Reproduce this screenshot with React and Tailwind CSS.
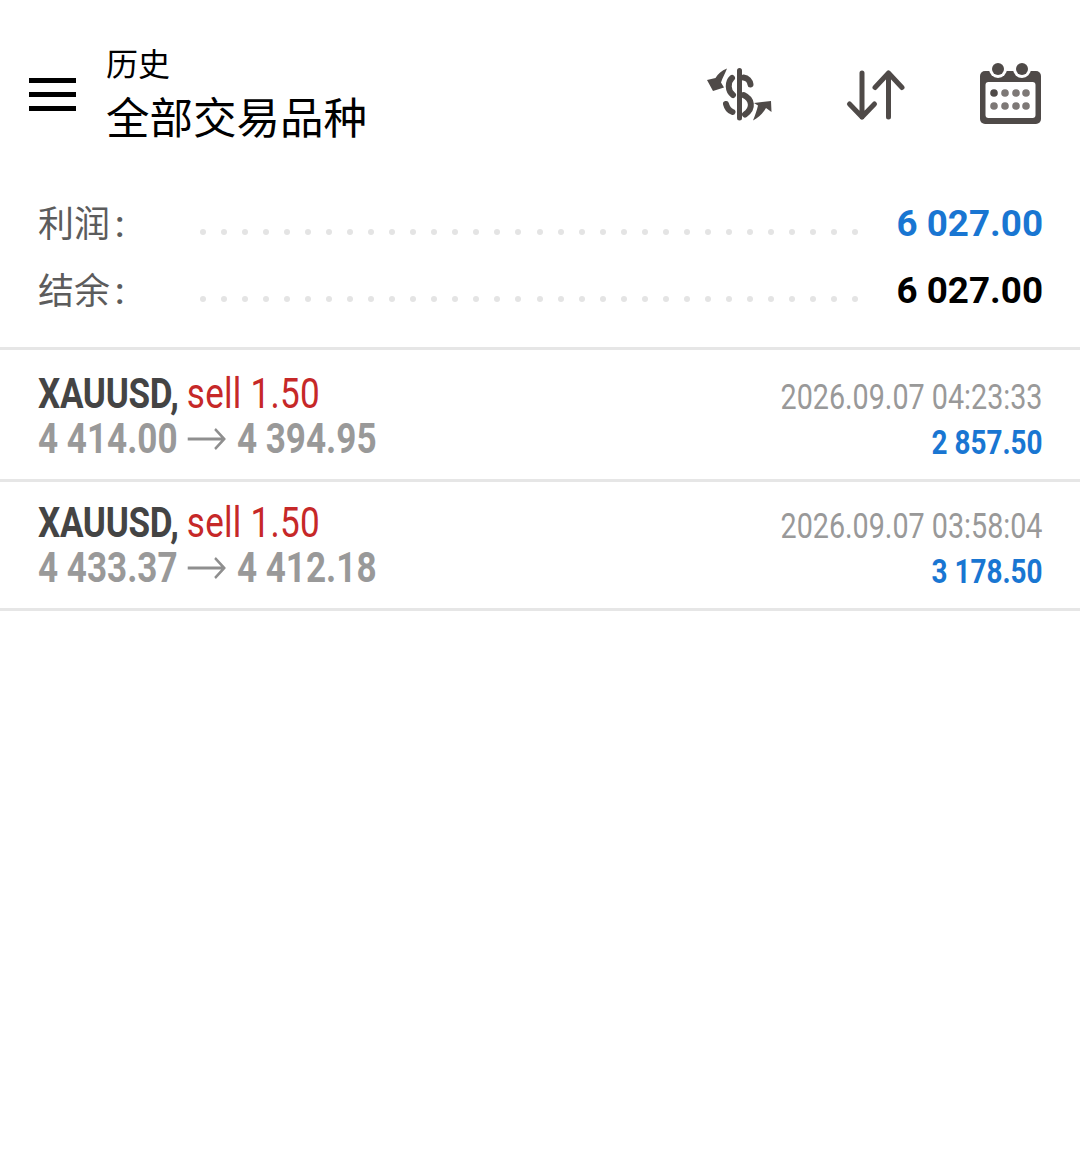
const sans = "font-['Roboto','Noto_Sans_CJK_SC',sans-serif]";

const trades = [
  { open: "4 414.00", close: "4 394.95", time: "2026.09.07 04:23:33", profit: "2 857.50" },
  { open: "4 433.37", close: "4 412.18", time: "2026.09.07 03:58:04", profit: "3 178.50" },
];

const dots = Array.from({ length: 32 });

function DollarIcon() {
  return (
    <svg width="80" height="70" viewBox="0 0 80 70" fill="#4f4a48">
      <rect x="37" y="8" width="5" height="52.5" rx="2.5" />
      {/* pieces of the S around the bar */}
      <g fill="none" stroke="#4f4a48" strokeWidth="6" strokeLinecap="round">
        <path d="M43.5 17.5 C47.5 18 50 21 50.5 24.5" />
        <path d="M32 18 C27.5 22 27.5 31 33 35" />
        <path d="M43.5 35 C52 39 54 48 45 54.5" />
        <path d="M26 44 C27 48 29.5 51 32.5 52" />
      </g>
      {/* swap arrows */}
      <path d="M7 20 L15.5 18 C18 14 21.5 10.5 27 8.5 C25 13.5 22.5 18 21 22.5 L24 27.5 L13 31 Z" />
      <path d="M71 41 L71.5 52 L66 48 C63.5 52.5 59 57.5 53 60.5 C55 55.5 57 50 58 45.5 L54 43 Z" />
    </svg>
  );
}

function SortIcon() {
  return (
    <svg width="60" height="56" viewBox="0 0 60 56" fill="none" stroke="#4f4a48" strokeWidth="5" strokeLinecap="round" strokeLinejoin="round">
      <path d="M17 5 V49 M4.5 36 L17 49 L29.5 36" />
      <path d="M43.5 49 V5 M30 19.5 L43.5 5 L57 19.5" />
    </svg>
  );
}

function CalendarIcon() {
  return (
    <svg width="61" height="62" viewBox="0 0 61 62">
      <rect x="0" y="8" width="61" height="53" rx="5" fill="#4f4a48" />
      <rect x="5.5" y="19" width="50" height="36" rx="3" fill="#fff" />
      <circle cx="18" cy="6" r="9" fill="#fff" />
      <circle cx="42" cy="6" r="9" fill="#fff" />
      <circle cx="18" cy="6" r="6" fill="#4f4a48" />
      <circle cx="42" cy="6" r="6" fill="#4f4a48" />
      {[14, 25, 36, 46].map((cx, i) => (
        <g key={cx}>
          <circle cx={cx} cy="30" r="3.8" fill={i === 0 ? "#4f4a48" : "#7d7876"} />
          <circle cx={cx} cy="43" r="3.8" fill="#7d7876" />
        </g>
      ))}
    </svg>
  );
}

function SummaryRow({ label, value, valueClass }) {
  return (
    <div className="flex items-center h-[67px] pl-[38px] pr-[37px]">
      <span className="w-[162px] text-[36px] leading-none text-[#5c5c5c]">
        {label}
        <span className="ml-[5px] font-medium">:</span>
      </span>
      <div className="flex justify-between w-[658px] mt-[14px]">
        {dots.map((_, i) => (
          <span key={i} className="w-[6px] h-[6px] shrink-0 rounded-full bg-[#e4e4e4]" />
        ))}
      </div>
      <span className={`ml-auto text-[36.8px] leading-none font-bold ${valueClass}`}>{value}</span>
    </div>
  );
}

function TradeRow({ trade, first }) {
  return (
    <div className={`flex justify-between pl-[38px] pr-[38px] border-b-[3px] border-[#e6e6e6] ${first ? "h-[132px] pt-[21px]" : "h-[129px] pt-[18px]"}`}>
      <div className="origin-left scale-x-[0.835] whitespace-nowrap">
        <div className="text-[42px] leading-[45px]">
          <span className="font-bold tracking-[-0.4px] text-[#444444]">XAUUSD, </span>
          <span className="tracking-[0.3px] text-[#c62828]">sell 1.50</span>
        </div>
        <div className="flex items-center text-[42px] leading-[45px] font-bold text-[#999999]">
          <span>{trade.open}</span>
          <svg className="ml-[12px] mr-[13px]" width="46" height="24" viewBox="0 0 46 24" fill="none" stroke="#8f8f8f" strokeWidth="3">
            <path d="M0 12 H44 M33 2 L44 12 L33 22" />
          </svg>
          <span>{trade.close}</span>
        </div>
      </div>
      <div className="origin-right scale-x-[0.82] whitespace-nowrap text-right">
        <div className="text-[35px] leading-[40px] mt-[7px] text-[#999999]">{trade.time}</div>
        <div className="text-[34px] leading-[40px] mt-[4px] font-bold text-[#1976d2]">{trade.profit}</div>
      </div>
    </div>
  );
}

export default function App() {
  return (
    <div className={`w-[1080px] h-[1172px] bg-white ${sans}`}>
      <header className="flex items-center h-[187px] pl-[29px] pr-[39px]">
        <div className="flex flex-col gap-[9px] w-[47px] mt-[2px]">
          <span className="h-[5px] bg-black" />
          <span className="h-[5px] bg-black" />
          <span className="h-[5px] bg-black" />
        </div>
        <div className="ml-[30px] mt-[3px] text-black">
          <div className="text-[32px] leading-[40px]">历史</div>
          <div className="text-[43.5px] leading-[52px] mt-[9px]">全部交易品种</div>
        </div>
        <div className="ml-auto flex items-center">
          <div className="mt-[3px]"><DollarIcon /></div>
          <div className="ml-[65px] mt-[4px]"><SortIcon /></div>
          <div className="ml-[75px]"><CalendarIcon /></div>
        </div>
      </header>
      <section className="border-b-[3px] border-[#e6e6e6] h-[163px] pt-[4px]">
        <SummaryRow label="利润" value="6 027.00" valueClass="text-[#1976d2]" />
        <SummaryRow label="结余" value="6 027.00" valueClass="text-black" />
      </section>
      {trades.map((trade, i) => (
        <TradeRow key={trade.time} trade={trade} first={i === 0} />
      ))}
    </div>
  );
}
